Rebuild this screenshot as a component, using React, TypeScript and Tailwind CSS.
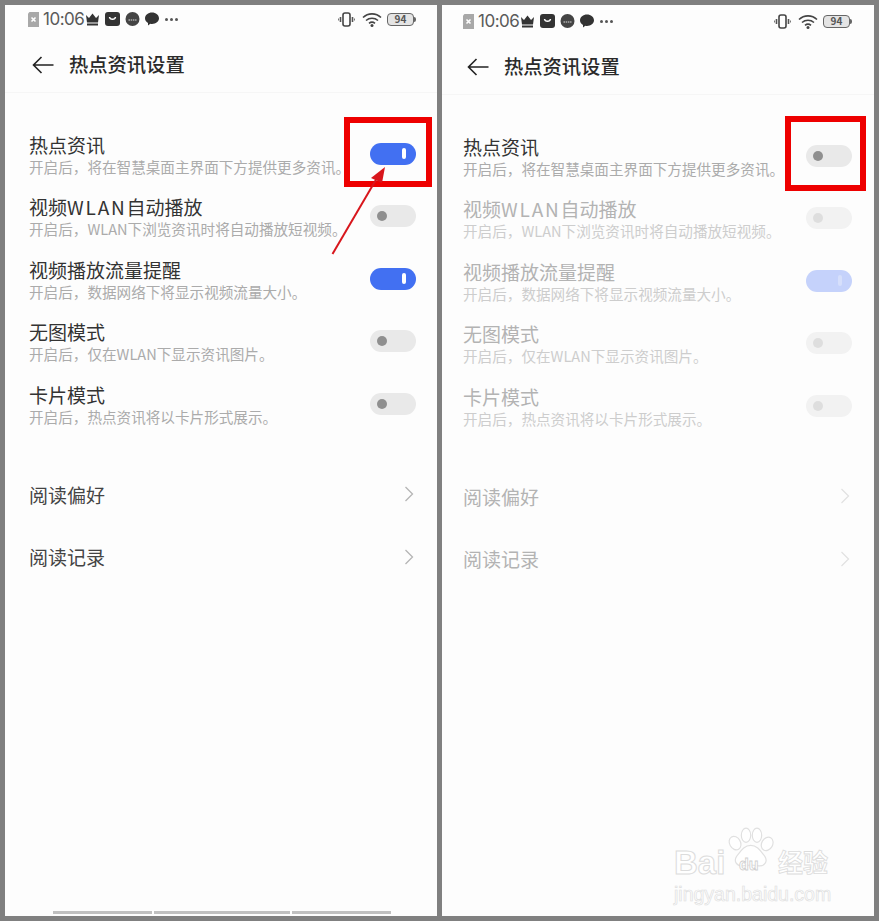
import React from "react";

const rows = [
  { t: "热点资讯", s: "开启后，将在智慧桌面主界面下方提供更多资讯。", on: true },
  { t: "视频WLAN自动播放", s: "开启后，WLAN下浏览资讯时将自动播放短视频。", on: false },
  { t: "视频播放流量提醒", s: "开启后，数据网络下将显示视频流量大小。", on: true },
  { t: "无图模式", s: "开启后，仅在WLAN下显示资讯图片。", on: false },
  { t: "卡片模式", s: "开启后，热点资讯将以卡片形式展示。", on: false },
];

function Toggle({ on, state }: { on: boolean; state: "normal" | "off" | "dim" }) {
  if (on) {
    return (
      <div className={`w-[46px] h-[22px] rounded-full flex items-center justify-end pr-[10px] shrink-0 ${state === "dim" ? "bg-[#c5d2fb]" : "bg-[#4270f2]"}`}>
        <div className={`w-[4px] h-[11px] rounded-full ${state === "dim" ? "bg-[#d6dffb]" : "bg-white"}`} />
      </div>
    );
  }
  return (
    <div className={`w-[46px] h-[22px] rounded-full flex items-center pl-[7px] shrink-0 ${state === "dim" ? "bg-[#f2f2f2]" : "bg-[#e9e9e9]"}`}>
      <div className={`w-[10px] h-[10px] rounded-full ${state === "dim" ? "bg-[#dedede]" : "bg-[#8f8f8f]"}`} />
    </div>
  );
}

function StatusBar() {
  return (
    <div className="flex items-center h-[20px] text-[#555]">
      <svg width="11" height="15" viewBox="0 0 11 15" className="mr-[4px]">
        <path d="M0 1.500 1.500 0H11v15H0z" fill="#a8a8a8" />
        <path d="M3.500 5.500l4 4M7.500 5.500l-4 4" stroke="#fff" strokeWidth="1.600" />
      </svg>
      <span className="text-[17px] leading-none text-[#5a5a5a] font-['Inter',sans-serif] tracking-[-0.500px]">10:06</span>
      <svg width="15" height="13" viewBox="0 0 15 13" className="ml-[1px]">
        <path d="M1 2l3 3 3.500-4.500L11 5l3-3-1 7.500H2z" fill="#333" />
        <rect x="2" y="10.500" width="11" height="2" fill="#333" />
      </svg>
      <svg width="15" height="14" viewBox="0 0 15 14" className="ml-[5px]">
        <rect width="15" height="14" rx="3" fill="#333" />
        <path d="M4.500 5c.5 3 5.500 3 6 0" stroke="#fff" strokeWidth="1.500" fill="none" />
      </svg>
      <svg width="15" height="14" viewBox="0 0 15 14" className="ml-[5px]">
        <circle cx="7.500" cy="7" r="7" fill="#444" />
        <path d="M3.500 8h8" stroke="#ddd" strokeWidth="1" strokeDasharray="1.500 .7" />
      </svg>
      <svg width="14" height="14" viewBox="0 0 14 14" className="ml-[5px]">
        <path d="M7 0.500c3.800 0 7 2.600 7 5.800s-3.200 5.700-7 5.700c-.6 0-1.200 0-1.700-.2L3 13.500V11C1.200 10 0 8.300 0 6.300 0 3.100 3.200.5 7 .5z" fill="#333" />
      </svg>
      <div className="flex gap-[2px] ml-[6px]">
        <div className="w-[3px] h-[3px] rounded-full bg-[#555]" />
        <div className="w-[3px] h-[3px] rounded-full bg-[#555]" />
        <div className="w-[3px] h-[3px] rounded-full bg-[#555]" />
      </div>
      <div className="flex-1" />
      <svg width="17" height="15" viewBox="0 0 17 15" className="mr-[6px]">
        <rect x="5" y="1" width="7" height="13" rx="2" fill="none" stroke="#444" strokeWidth="1.600" />
        <path d="M2.500 5v5M14.500 5v5" stroke="#555" strokeWidth="1.600" />
        <path d="M.5 6.500v2M16.500 6.500v2" stroke="#777" strokeWidth="1" />
      </svg>
      <svg width="22" height="15" viewBox="0 0 20 15" className="mr-[4px]">
        <path d="M1 5.500c5-4.800 13-4.800 18 0" fill="none" stroke="#444" strokeWidth="1.600" />
        <path d="M4 8.500c3.400-3 8.600-3 12 0" fill="none" stroke="#444" strokeWidth="1.600" />
        <path d="M7 11.300c1.800-1.500 4.200-1.500 6 0" fill="none" stroke="#444" strokeWidth="1.600" />
        <circle cx="10" cy="13.500" r="1.500" fill="#444" />
      </svg>
      <div className="flex items-center">
        <div className="w-[27px] h-[13px] rounded-[4px] border border-[#666] flex items-center justify-center text-[10px] leading-none bg-[#e4e4e4] text-[#555] font-bold">94</div>
        <div className="w-[2px] h-[5px] bg-[#666] rounded-r-sm" />
      </div>
    </div>
  );
}

function RowTitle({ text }: { text: string }) {
  const parts = text.split("WLAN");
  if (parts.length === 1) return <>{text}</>;
  return (
    <>
      {parts[0]}
      <span className="tracking-[1.800px]">WLAN</span>
      {parts[1]}
    </>
  );
}

function Phone({ right }: { right?: boolean }) {
  return (
    <div className={`relative w-[432px] h-[911px] bg-[#fdfdfd] flex flex-col overflow-hidden ${right ? "pt-[6px] pl-[21px] pr-[22px]" : "pt-[4px] pl-[23px] pr-[21px]"}`}>
      <StatusBar />
      <div className={`flex items-center h-[30px] mt-[21px] ${right ? "-mr-[22px] -ml-[21px] pl-[25px]" : "-mr-[21px] -ml-[23px] pl-[27px]"}`}>
        <svg width="22" height="18" viewBox="0 0 22 18" className="mr-[15px]">
          <path d="M21.500 9H1.500M9.500 1 1.500 9l8 8" fill="none" stroke="#222" strokeWidth="1.600" />
        </svg>
        <span className="text-[19.300px] leading-none text-[#2a2a2a] font-medium">热点资讯设置</span>
      </div>
      <div className={`h-px bg-[#f6f6f6] mt-[12px] ${right ? "-ml-[21px] -mr-[22px]" : "-ml-[23px] -mr-[21px]"}`} />
      <div className="flex flex-col mt-[30.500px]">
        {rows.map((r, i) => {
          const dim = right && i > 0;
          return (
            <div key={r.t} className="flex items-center justify-between h-[62.500px]">
              <div className={`flex flex-col gap-[2px] ${right ? "" : "ml-[1px]"}`}>
                <div className={`text-[19px] leading-[22px] ${dim ? "text-[#b3b3b3]" : "text-[#333]"}`}>
                  <RowTitle text={r.t} />
                </div>
                <div className={`text-[14.600px] leading-[18px] whitespace-nowrap ${dim ? "text-[#cdcdcd]" : "text-[#ababab]"}`}>{r.s}</div>
              </div>
              <div className="-mt-[2px] relative z-10">
                <Toggle on={right ? (i === 2) : r.on} state={dim ? "dim" : "normal"} />
              </div>
            </div>
          );
        })}
      </div>
      <div className="flex flex-col mt-[27px]">
        {["阅读偏好", "阅读记录"].map((t) => (
          <div key={t} className={`flex items-center justify-between h-[62.500px] ${right ? "" : "ml-[1px]"}`}>
            <span className={`text-[19px] leading-none ${right ? "text-[#b3b3b3]" : "text-[#444]"}`}>{t}</span>
            <svg width="10" height="16" viewBox="0 0 10 16" className="mr-[2px]">
              <path d="M1.500 1l7 7-7 7" fill="none" stroke={right ? "#e2e2e2" : "#b5b5b5"} strokeWidth="1.300" />
            </svg>
          </div>
        ))}
      </div>
      {!right && (
        <div className="absolute left-[48px] bottom-[2px] flex gap-[2px]">
          <div className="w-[99px] h-[3px] bg-[#c0c0c0]" />
          <div className="w-[136px] h-[3px] bg-[#c0c0c0]" />
          <div className="w-[99px] h-[3px] bg-[#c0c0c0]" />
        </div>
      )}
      {right && (
        <div className="absolute left-[232px] top-[820px] w-[170px] h-[85px] pointer-events-none">
          <svg width="47" height="40" viewBox="8 4 60 50" className="absolute left-[54px] top-[2px]">
            <g fill="#fff" stroke="#e0e0e0" strokeWidth="1.500">
              <ellipse cx="17" cy="24" rx="7" ry="9" transform="rotate(-30 17 24)" />
              <ellipse cx="31" cy="14" rx="6" ry="9" />
              <ellipse cx="45" cy="14" rx="6" ry="9" />
              <ellipse cx="58" cy="25" rx="7" ry="9" transform="rotate(30 58 25)" />
              <path d="M37 27c9 0 13 8 18 14 4 6 0 13-8 12-4-.5-6-1-10-1s-6 .5-10 1c-8 1-12-6-8-12 5-6 9-14 18-14z" />
            </g>
          </svg>
          <div className="absolute left-0 top-[21px] text-[33px] leading-none font-bold text-white [-webkit-text-stroke:1px_#dcdcdc] font-['Liberation_Sans',sans-serif]">Bai</div>
          <div className="absolute left-[65px] top-[32px] text-[16px] leading-none font-bold text-white [-webkit-text-stroke:0.800px_#d0d0d0] font-['Liberation_Sans',sans-serif]">du</div>
          <div className="absolute left-[104px] top-[24px] text-[25px] leading-none font-bold text-white [-webkit-text-stroke:0.800px_#dcdcdc]">经验</div>
          <div className="absolute left-0 top-[60px] text-[19.500px] leading-none text-white [-webkit-text-stroke:0.700px_#e0e0e0] font-['Liberation_Sans',sans-serif]">jingyan.baidu.com</div>
        </div>
      )}
    </div>
  );
}

export default function App() {
  return (
    <div className="relative w-[879px] h-[921px] bg-[#808080] pt-[5px] pl-[5px] flex gap-[5px] overflow-hidden font-['Noto_Sans_CJK_SC','Noto_Sans',sans-serif]">
      <Phone />
      <Phone right />
      <div className="absolute left-[344px] top-[117px] w-[88px] h-[70px] border-[6px] border-[#ee0000]" />
      <div className="absolute left-[785px] top-[116px] w-[81px] h-[75px] border-[6px] border-[#ee0000]" />
      <svg width="60" height="100" viewBox="0 0 60 100" className="absolute left-[330px] top-[165px]">
        <path d="M2.500 89 47 13" stroke="#d8161c" strokeWidth="2" fill="none" />
        <path d="M55 2 41 13l11 5z" fill="#d8161c" />
      </svg>
    </div>
  );
}
